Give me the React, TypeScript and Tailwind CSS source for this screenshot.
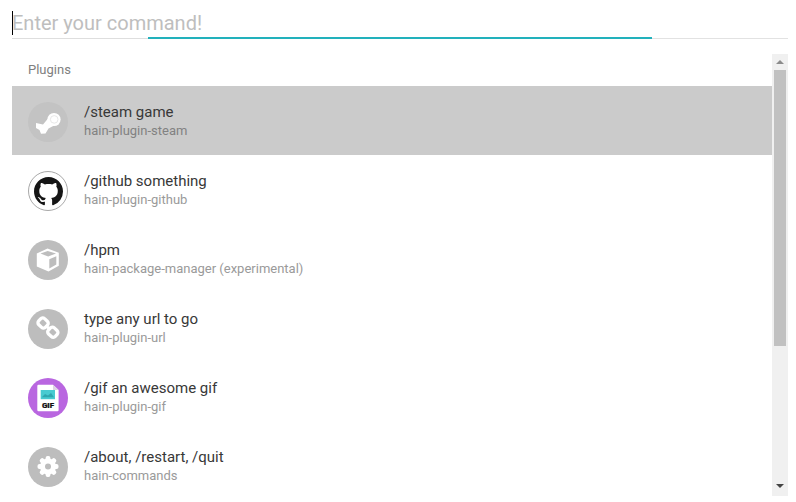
import type { ReactNode } from 'react';

function SteamIcon() {
  return (
    <svg viewBox="0 0 40 40" className="size-10">
      <path d="M8 21 15 22.5 20.5 16 28 22.5 20.5 26.5 17.5 31.5 13 31.8 11.5 28 8 26Z" fill="#fff" />
      <circle cx="26" cy="17.5" r="6.6" fill="#fff" />
      <circle cx="26.2" cy="17.4" r="3.8" fill="none" stroke="#e8e8e8" strokeWidth="1" />
    </svg>
  );
}

function GithubIcon() {
  return (
    <svg viewBox="0 0 16 16" className="size-[29px]" fill="#151515">
      <path d="M8 0C3.58 0 0 3.58 0 8c0 3.54 2.29 6.53 5.47 7.59.4.07.55-.17.55-.38 0-.19-.01-.82-.01-1.49-2.01.37-2.53-.49-2.69-.94-.09-.23-.48-.94-.82-1.13-.28-.15-.68-.52-.01-.53.63-.01 1.08.58 1.23.82.72 1.21 1.87.87 2.33.66.07-.52.28-.87.51-1.07-1.78-.2-3.64-.89-3.64-3.95 0-.87.31-1.59.82-2.15-.08-.2-.36-1.02.08-2.12 0 0 .67-.21 2.2.82.64-.18 1.32-.27 2-.27s1.36.09 2 .27c1.53-1.04 2.2-.82 2.2-.82.44 1.1.16 1.92.08 2.12.51.56.82 1.27.82 2.15 0 3.07-1.87 3.75-3.65 3.95.29.25.54.73.54 1.48 0 1.07-.01 1.93-.01 2.2 0 .21.15.46.55.38A8.01 8.01 0 0 0 16 8c0-4.42-3.58-8-8-8Z" />
    </svg>
  );
}

function CubeIcon() {
  return (
    <svg viewBox="0 0 40 40" className="size-10">
      <path d="M19.5 8.5 30.8 12.8V25.7L20.5 31.5 8.8 26.5V13.5Z" fill="#fff" />
      <path d="M12.5 13.6 19.7 10.9 28 13.4 20.2 16.5Z" fill="#bdbdbd" />
      <path d="M21.3 19.2 28.3 16.3V24.4L21.3 28.4Z" fill="#bdbdbd" />
    </svg>
  );
}

function LinkIcon() {
  return (
    <svg viewBox="0 0 40 40" className="size-10" fill="none" stroke="#fff" strokeWidth="3.3">
      <rect x="10.4" y="9.8" width="9.4" height="8.4" rx="2.8" transform="rotate(43 15.1 14)" />
      <rect x="20.1" y="19" width="9.4" height="8.4" rx="2.8" transform="rotate(43 24.8 23.2)" />
      <path d="m17.5 16.2 5 4.8" strokeWidth="2.8" />
    </svg>
  );
}

function GifIcon() {
  return (
    <svg viewBox="0 0 40 40" className="size-10">
      <path d="M9.3 8Q9.3 6.8 10.5 6.8H25L30.6 12V32Q30.6 33.2 29.4 33.2H10.5Q9.3 33.2 9.3 32Z" fill="#fff" />
      <path d="M25 6.8V12H30.6Z" fill="#ddd3e4" />
      <path d="M12.7 12H27V21.2H12.7Z" fill="#48cbd1" />
      <path d="m14 19 3-3 3 1.5 3-2.5 3 4.2H14Z" fill="#2fa8b0" />
      <text x="20" y="30.3" textAnchor="middle" fontSize="8" fontWeight="900" fill="#111" stroke="#111" strokeWidth=".2" fontFamily="Roboto, sans-serif">GIF</text>
    </svg>
  );
}

function GearIcon() {
  return (
    <svg viewBox="0 0 40 40" className="size-10">
      <g fill="#fff">
        <circle cx="20" cy="19.5" r="8" />
        {[0, 45, 90, 135].map((angle) => (
          <rect key={angle} x="17.6" y="9" width="4.8" height="21" rx="2" transform={`rotate(${angle} 20 19.5)`} />
        ))}
      </g>
      <circle cx="20" cy="19.5" r="3" fill="#bdbdbd" />
    </svg>
  );
}

type Item = { title: string; detail: string; icon: ReactNode; avatar: string; selected?: boolean };

const items: Item[] = [
  { title: '/steam game', detail: 'hain-plugin-steam', icon: <SteamIcon />, avatar: 'bg-[#c3c3c3]', selected: true },
  { title: '/github something', detail: 'hain-plugin-github', icon: <GithubIcon />, avatar: 'bg-white border border-[#a8a8a8]' },
  { title: '/hpm', detail: 'hain-package-manager (experimental)', icon: <CubeIcon />, avatar: 'bg-[#bdbdbd]' },
  { title: 'type any url to go', detail: 'hain-plugin-url', icon: <LinkIcon />, avatar: 'bg-[#bdbdbd]' },
  { title: '/gif an awesome gif', detail: 'hain-plugin-gif', icon: <GifIcon />, avatar: 'bg-[#b966e0]' },
  { title: '/about, /restart, /quit', detail: 'hain-commands', icon: <GearIcon />, avatar: 'bg-[#bdbdbd]' },
];

function Row({ title, detail, icon, avatar, selected }: Item) {
  return (
    <li className={`flex h-[69px] shrink-0 items-center gap-4 px-4 ${selected ? 'bg-[#cbcbcb]' : ''}`}>
      <div className={`mt-[3px] flex size-10 shrink-0 items-center justify-center rounded-full ${avatar}`}>{icon}</div>
      <div className="mt-px whitespace-nowrap">
        <div className="text-[15px] leading-[19px] text-[#383838]">{title}</div>
        <div className={`text-[13px] leading-[18px] ${selected ? 'text-[#828282]' : 'text-[#9a9a9a]'}`}>{detail}</div>
      </div>
    </li>
  );
}

export default function App() {
  return (
    <main className="flex h-[502px] w-[796px] flex-col overflow-hidden bg-white px-2 pl-3 font-['Roboto',sans-serif]">
      <header className="h-[54px] w-[776px] shrink-0">
        <div className="flex h-[37px] items-start pt-[11px]">
          <span className="h-6 w-px shrink-0 bg-black" />
          <span className="-ml-px text-[20px] leading-6 text-[#bebebe]">Enter your command!</span>
        </div>
        <div className="flex h-[2px] items-end">
          <span className="h-px w-[136px] bg-[#dedede]" />
          <span className="h-[2px] w-[504px] bg-[#22b1bc]" />
          <span className="h-px flex-1 bg-[#e2e2e2]" />
        </div>
      </header>
      <div className="flex h-[442px] w-[776px] overflow-hidden">
        <section className="flex w-[760px] flex-col">
          <h2 className="h-8 shrink-0 pl-4 text-[13px] leading-8 text-[#808080]">Plugins</h2>
          <ul className="flex flex-col">
            {items.map((item) => <Row key={item.title} {...item} />)}
          </ul>
        </section>
        <div className="flex w-4 flex-col items-center bg-[#f0f0f0]">
          <div className="flex h-4 w-4 shrink-0 items-center justify-center">
            <svg viewBox="0 0 8 4" className="h-1 w-2"><path d="M0 4 4 0 8 4Z" fill="#8b8b8b" /></svg>
          </div>
          <div className="h-[276px] w-3 bg-[#c1c1c1]" />
          <div className="mt-auto flex h-5 w-4 items-center justify-center">
            <svg viewBox="0 0 8 4" className="h-1 w-2"><path d="M0 0h8L4 4Z" fill="#444" /></svg>
          </div>
        </div>
      </div>
    </main>
  );
}
